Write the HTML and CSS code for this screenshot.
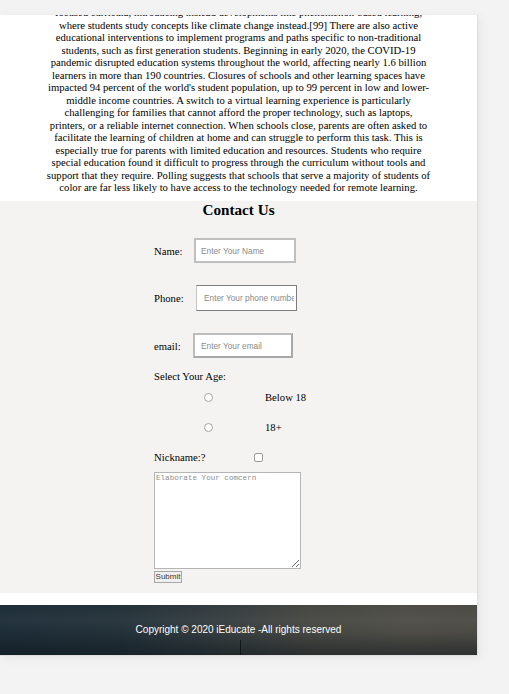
FILE: index.html
```html
<!DOCTYPE html>
<html>
<head>
<meta charset="utf-8">
<link rel="stylesheet" href="styles.css">
</head>
<body>
<div class="frame">
  <div class="article-clip">
    <p class="article">focused curricula, introducing instead developments like phenomenon-based learning,<br>where students study concepts like climate change instead.[99] There are also active<br>educational interventions to implement programs and paths specific to non-traditional<br>students, such as first generation students. Beginning in early 2020, the COVID-19<br>pandemic disrupted education systems throughout the world, affecting nearly 1.6 billion<br>learners in more than 190 countries. Closures of schools and other learning spaces have<br>impacted 94 percent of the world's student population, up to 99 percent in low and lower-<br>middle income countries. A switch to a virtual learning experience is particularly<br>challenging for families that cannot afford the proper technology, such as laptops,<br>printers, or a reliable internet connection. When schools close, parents are often asked to<br>facilitate the learning of children at home and can struggle to perform this task. This is<br>especially true for parents with limited education and resources. Students who require<br>special education found it difficult to progress through the curriculum without tools and<br>support that they require. Polling suggests that schools that serve a majority of students of<br>color are far less likely to have access to the technology needed for remote learning.</p>
  </div>
  <section class="contact">
    <h2 class="title">Contact Us</h2>
    <form class="form">
      <div class="row row-name"><label class="lbl lbl-name">Name:</label><input class="in in-name" type="text" placeholder="Enter Your Name"></div>
      <div class="row row-phone"><label class="lbl lbl-phone">Phone:</label><input class="in in-phone" type="text" placeholder="Enter Your phone number"></div>
      <div class="row row-email"><label class="lbl lbl-email">email:</label><input class="in in-email" type="text" placeholder="Enter Your email"></div>
      <div class="age">Select Your Age:</div>
      <div class="radio-row first"><span class="radio"></span><span class="opt">Below 18</span></div>
      <div class="radio-row"><span class="radio"></span><span class="opt">18+</span></div>
      <div class="nick-row"><span class="nick">Nickname:?</span><span class="check"></span></div>
      <textarea class="concern" placeholder="Elaborate Your comcern"></textarea>
      <button class="submit" type="button">Submit</button>
    </form>
  </section>
  <div class="spacer"></div>
  <footer class="footer">Copyright © 2020 iEducate -All rights reserved</footer>
</div>
</body>
</html>
```
FILE: styles.css
```css
html, body {
  margin: 0;
  padding: 0;
}
body {
  background: #f3f3f3;
  width: 509px;
  height: 694px;
  overflow: hidden;
  font-family: "Liberation Serif", "Times New Roman", serif;
  color: #000;
}
.frame {
  margin-top: 15px;
  width: 477px;
  background: #fff;
  border-right: 1px solid #dedede;
  border-bottom: 1px solid #dedede;
  box-shadow: 2px 2px 10px rgba(0,0,0,0.06);
}
.article-clip {
  overflow: hidden;
  height: 186px;
  background: #fff;
}
.article {
  margin: -9px 0 0 0;
  font-size: 10.67px;
  line-height: 12.5px;
  text-align: center;
  white-space: nowrap;
}
.contact {
  background: #f4f3f1;
  padding-bottom: 10px;
}
.title {
  margin: 0;
  font-size: 15.2px;
  line-height: 18px;
  font-weight: bold;
  text-align: center;
}
.form {
  padding-left: 154px;
  display: flex;
  flex-direction: column;
  align-items: flex-start;
  font-size: 10.67px;
}
.row {
  display: flex;
  align-items: center;
}
.row-name { margin-top: 19px; }
.row-phone { margin-top: 22px; }
.row-email { margin-top: 22px; }
.lbl { line-height: 12px; }
.lbl-name { width: 40px; }
.lbl-phone { width: 42px; }
.lbl-email { width: 39px; }
.in {
  box-sizing: border-box;
  margin: 0;
  background: #fff;
  font-family: "Liberation Sans", Arial, sans-serif;
  font-size: 8.3px;
  outline: none;
}
.in::placeholder { color: #8a8a8a; }
.in-name {
  width: 102px;
  height: 25px;
  border: 2px solid #bfbfbf;
  padding: 0 0 0 5px;
}
.in-phone {
  width: 101px;
  height: 26px;
  border: 1px solid #7d7d7d;
  border-left-color: #c6c6c6;
  padding: 0 2px 0 7px;
}
.in-email {
  width: 100px;
  height: 25px;
  border: 2px solid #bdbdbd;
  border-right-color: #a8a8a8;
  border-bottom-color: #a8a8a8;
  padding: 0 0 0 6px;
}
.age {
  margin-top: 12px;
  line-height: 12px;
}
.radio-row {
  display: flex;
  align-items: center;
  height: 12px;
  margin-top: 18px;
}
.radio-row.first { margin-top: 9px; }
.radio {
  box-sizing: border-box;
  width: 9px;
  height: 9px;
  margin-left: 50px;
  border: 1px solid #a5a5a5;
  border-radius: 50%;
  background: #fff;
}
.opt {
  margin-left: 52px;
  line-height: 12px;
}
.nick-row {
  display: flex;
  align-items: center;
  height: 12px;
  margin-top: 18px;
}
.nick {
  width: 100px;
  line-height: 12px;
}
.check {
  box-sizing: border-box;
  width: 9px;
  height: 9px;
  border: 1px solid #9a9a9a;
  border-radius: 2px;
  background: #fff;
}
.concern {
  display: block;
  box-sizing: border-box;
  width: 147px;
  height: 97px;
  margin: 9px 0 0 0;
  padding: 1px 1px;
  border: 1px solid #b5b5b5;
  background: #fff;
  font-family: "Liberation Mono", "DejaVu Sans Mono", monospace;
  font-size: 7.6px;
  line-height: 9px;
  outline: none;
}
.concern::placeholder { color: #8e8e8e; }
.submit {
  box-sizing: border-box;
  width: 28px;
  height: 12px;
  margin-top: 2px;
  padding: 0;
  border: 1px solid #a8a8a8;
  background: #efefef;
  font-family: "Liberation Sans", Arial, sans-serif;
  font-size: 8px;
  line-height: 10px;
  color: #3a3a3a;
}
.spacer {
  height: 12px;
  background: #fff;
}
.footer {
  height: 50px;
  line-height: 50px;
  text-align: center;
  color: #fff;
  font-family: "Liberation Sans", Arial, sans-serif;
  font-size: 10px;
  background:
    linear-gradient(to right, transparent 240px, rgba(10,15,20,0.8) 240px, rgba(10,15,20,0.8) 241px, transparent 241px) bottom / 100% 15px no-repeat,
    linear-gradient(to bottom, rgba(255,255,255,0) 0%, rgba(255,255,255,0.04) 30%, rgba(0,0,0,0) 55%, rgba(8,16,22,0.45) 100%),
    linear-gradient(to right, #1d2d37 0%, #233139 25%, #333c3f 45%, #464742 65%, #4d4c46 85%, #4b4a45 100%);
}
```
